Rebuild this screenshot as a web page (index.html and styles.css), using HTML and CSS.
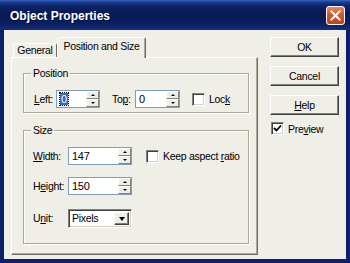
FILE: index.html
```html
<!DOCTYPE html>
<html>
<head>
<meta charset="utf-8">
<link rel="stylesheet" href="styles.css">
</head>
<body>
<div class="window">
  <div class="titlebar">
    <span class="title">Object Properties</span>
    <span class="close"><svg width="17" height="17" viewBox="0 0 17 17"><path d="M4.5 4.5 L12.5 12.5 M12.5 4.5 L4.5 12.5" stroke="#fff" stroke-width="2.2" stroke-linecap="square"/></svg></span>
  </div>
  <div class="client">
    <div class="tabs-area">
      <div class="tabstrip">
        <div class="tab tab-general">General</div>
        <div class="tab selected">Position and Size</div>
      </div>
      <div class="panel">
        <div class="group group-pos">
          <div class="group-title">Position</div>
          <div class="row">
            <span class="lbl lbl-left"><u>L</u>eft:</span>
            <div class="spin spin-left">
              <div class="spin-text"><span class="sel">0</span></div>
              <div class="spin-btns"><span class="sb up"></span><span class="sb down"></span></div>
            </div>
            <span class="lbl lbl-top">To<u>p</u>:</span>
            <div class="spin spin-top">
              <div class="spin-text">0</div>
              <div class="spin-btns"><span class="sb up"></span><span class="sb down"></span></div>
            </div>
            <span class="check check-lock"><span class="box"></span><span class="check-text">Loc<u>k</u></span></span>
          </div>
        </div>
        <div class="group group-size">
          <div class="group-title">Size</div>
          <div class="row">
            <span class="lbl lbl-size"><u>W</u>idth:</span>
            <div class="spin spin-size">
              <div class="spin-text">147</div>
              <div class="spin-btns"><span class="sb up"></span><span class="sb down"></span></div>
            </div>
            <span class="check check-aspect"><span class="box"></span><span class="check-text">Keep aspect <u>r</u>atio</span></span>
          </div>
          <div class="row row-height">
            <span class="lbl lbl-size">H<u>e</u>ight:</span>
            <div class="spin spin-size">
              <div class="spin-text">150</div>
              <div class="spin-btns"><span class="sb up"></span><span class="sb down"></span></div>
            </div>
          </div>
          <div class="row row-unit">
            <span class="lbl lbl-size">U<u>n</u>it:</span>
            <div class="select">
              <div class="select-text">Pixels</div>
              <div class="select-btn"><span class="arrow"></span></div>
            </div>
          </div>
        </div>
      </div>
    </div>
    <div class="buttons">
      <div class="btn">OK</div>
      <div class="btn">Cancel</div>
      <div class="btn"><span><u>H</u>elp</span></div>
      <span class="check check-preview"><span class="box checked"><svg width="9" height="9" viewBox="0 0 9 9"><path d="M1 4 L3.5 6.5 L8 1.5" fill="none" stroke="#000" stroke-width="1.8"/></svg></span><span class="check-text">Pre<u>v</u>iew</span></span>
    </div>
  </div>
</div>
</body>
</html>
```

FILE: styles.css
```css
html, body {
  margin: 0;
  padding: 0;
  background: #0c2270;
}
body {
  font-family: "Liberation Sans", Arial, sans-serif;
  font-size: 10.5px;
  letter-spacing: -0.3px;
  color: #000;
}
u { text-decoration: underline; text-underline-offset: 1px; }

.window {
  width: 350px;
  height: 263px;
  box-sizing: border-box;
  background: #0b2068;
  padding: 0 4px 4px 4px;
  display: flex;
  flex-direction: column;
  overflow: hidden;
}
.titlebar {
  height: 30px;
  margin: 0 -4px;
  padding: 0 5px 0 10px;
  display: flex;
  align-items: center;
  background: linear-gradient(to bottom, #3563c0 0, #1a3d94 2px, #0c2366 6px, #081a52 45%, #0a1f60 80%, #12307e 100%);
}
.title {
  color: #fff;
  font-weight: bold;
  font-size: 12px;
  letter-spacing: 0;
  text-shadow: 1px 1px 0 #061040;
  padding-top: 1px;
}
.close {
  margin-left: auto;
  width: 17px;
  height: 17px;
  border: 1px solid #fff;
  border-radius: 3px;
  background: linear-gradient(to bottom, #ea8a64 0, #d8582e 40%, #c4401a 100%);
  display: flex;
}

.client {
  height: 229px;
  background: #efeee7;
  display: flex;
  padding: 7px 0 0 7px;
  box-sizing: border-box;
}
.tabs-area {
  width: 247px;
  display: flex;
  flex-direction: column;
}
.tabstrip {
  height: 20px;
  display: flex;
  align-items: flex-end;
  padding-left: 2px;
  position: relative;
  z-index: 1;
}
.tab {
  height: 14px;
  box-sizing: border-box;
  border-top: 1px solid #fff;
  border-left: 1px solid #fff;
  border-right: 1px solid #716f64;
  border-radius: 2px 2px 0 0;
  line-height: 13px;
  background: #efeee7;
  white-space: nowrap;
  text-align: center;
}
.tab-general { width: 44px; }
.tab.selected {
  width: 89px;
  height: 21px;
  margin-bottom: -1px;
  line-height: 17px;
  box-shadow: inset -1px 0 0 #aca899;
}

.panel {
  height: 198px;
  box-sizing: border-box;
  border-top: 1px solid #fff;
  border-left: 1px solid #fff;
  border-right: 1px solid #716f64;
  border-bottom: 1px solid #716f64;
  box-shadow: inset -1px -1px 0 #aca899;
  padding: 15px 0 0 11px;
}

.group {
  width: 226px;
  box-sizing: border-box;
  border: 1px solid #aca899;
  box-shadow: inset 1px 1px 0 #fff, 1px 1px 0 #fff;
  padding: 0 0 0 10px;
}
.group-pos { height: 40px; }
.group-size { height: 114px; margin-top: 17px; }
.group-title {
  width: fit-content;
  margin: -7px 0 0 -3px;
  padding: 0 2px;
  line-height: 13px;
  background: #efeee7;
}
.row {
  display: flex;
  align-items: center;
  height: 18px;
  margin-top: 10px;
}
.row-height { margin-top: 12px; }
.row-unit { margin-top: 14px; }

.lbl { white-space: nowrap; }
.lbl-left { width: 22px; }
.lbl-top { width: 23px; margin-left: 12px; }
.lbl-size { width: 35px; margin-left: -1px; }

.spin {
  height: 18px;
  box-sizing: border-box;
  border: 1px solid #7f9db9;
  background: #fff;
  display: flex;
}
.spin-left { width: 44px; }
.spin-top { width: 45px; }
.spin-size { width: 64px; }
.spin-text {
  flex: 1;
  line-height: 16px;
  padding-left: 3px;
  font-size: 11px;
}
.sel {
  background: #316ac5;
  color: #fff;
  outline: 1px dotted #000;
  padding: 0 1px;
}
.spin-btns {
  width: 13px;
  display: flex;
  flex-direction: column;
}
.sb {
  flex: 1;
  box-sizing: border-box;
  background: #efeee7;
  border-top: 1px solid #fff;
  border-left: 1px solid #fff;
  border-right: 1px solid #808080;
  border-bottom: 1px solid #808080;
  display: flex;
  align-items: center;
  justify-content: center;
}
.sb::after {
  content: "";
  width: 0;
  height: 0;
  border-left: 2px solid transparent;
  border-right: 2px solid transparent;
}
.sb.up::after { border-bottom: 2px solid #000; }
.sb.down::after { border-top: 2px solid #000; }

.check {
  display: flex;
  align-items: center;
  white-space: nowrap;
}
.check-text { white-space: pre; }
.check-lock { margin-left: 12px; }
.check-aspect { margin-left: 14px; }
.box {
  width: 13px;
  height: 13px;
  flex: none;
  box-sizing: border-box;
  background: #fff;
  border-top: 1px solid #808080;
  border-left: 1px solid #808080;
  border-right: 1px solid #fff;
  border-bottom: 1px solid #fff;
  box-shadow: inset 1px 1px 0 #404040, inset -1px -1px 0 #d4d0c8;
  margin-right: 4px;
  display: flex;
  align-items: center;
  justify-content: center;
}

.select {
  width: 64px;
  height: 19px;
  box-sizing: border-box;
  border-top: 1px solid #808080;
  border-left: 1px solid #808080;
  border-right: 1px solid #fff;
  border-bottom: 1px solid #fff;
  box-shadow: inset 1px 1px 0 #404040, inset -1px -1px 0 #d4d0c8;
  background: #fff;
  display: flex;
  padding: 2px;
}
.select-text {
  flex: 1;
  line-height: 13px;
  padding-left: 1px;
}
.select-btn {
  width: 15px;
  box-sizing: border-box;
  background: #efeee7;
  border-top: 1px solid #fff;
  border-left: 1px solid #fff;
  border-right: 1px solid #404040;
  border-bottom: 1px solid #404040;
  box-shadow: inset -1px -1px 0 #808080;
  display: flex;
  align-items: center;
  justify-content: center;
}
.arrow {
  width: 0;
  height: 0;
  border-left: 3.5px solid transparent;
  border-right: 3.5px solid transparent;
  border-top: 4px solid #000;
  margin-top: 1px;
}

.buttons {
  margin-left: 12px;
  width: 69px;
  display: flex;
  flex-direction: column;
  gap: 9px;
}
.btn {
  height: 20px;
  box-sizing: border-box;
  border-top: 1px solid #fff;
  border-left: 1px solid #fff;
  border-right: 1px solid #404040;
  border-bottom: 1px solid #404040;
  box-shadow: inset -1px -1px 0 #808080;
  display: flex;
  align-items: center;
  justify-content: center;
  background: #efeee7;
}
.check-preview {
  margin-top: -2px;
  margin-left: 1px;
}
```
